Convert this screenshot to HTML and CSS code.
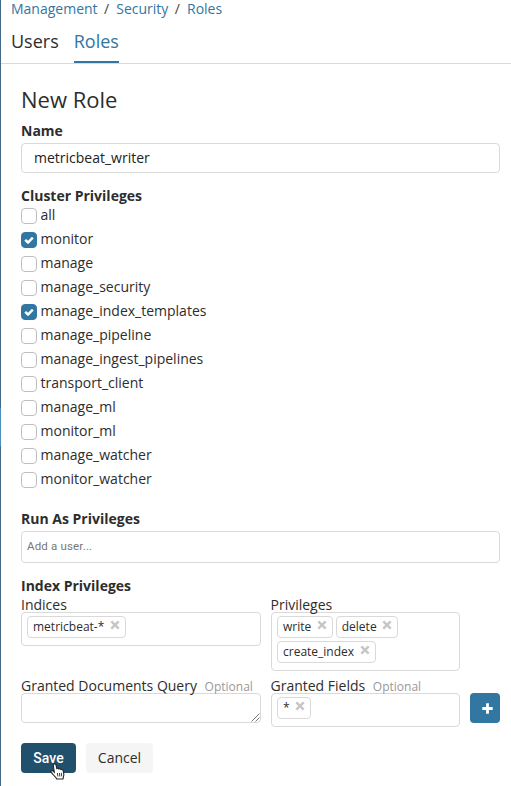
FILE: index.html
```html
<!DOCTYPE html>
<html lang="en">
<head>
<meta charset="utf-8">
<title>New Role</title>
<link rel="stylesheet" href="styles.css">
</head>
<body>
<svg width="0" height="0" class="defs" aria-hidden="true">
  <symbol id="x" viewBox="0 0 10 10"><path d="M1.3 1.3L8.7 8.7M8.7 1.3L1.3 8.7" fill="none" stroke="#c6c6c6" stroke-width="2.4"/></symbol>
  <symbol id="check" viewBox="0 0 10 8"><path d="M1.2 3.8L4 6.5L8.8 1.6" fill="none" stroke="#fff" stroke-width="2.5"/></symbol>
</svg>
<div class="page">
  <nav class="crumbs"><a>Management</a><i>/</i><a>Security</a><i>/</i><a>Roles</a></nav>
  <div class="tabs"><a class="tab">Users</a><a class="tab active">Roles</a></div>
  <main class="form">
    <h1>New Role</h1>
    <h2>Name</h2>
    <div class="input name">metricbeat_writer</div>
    <h2 class="cluster-title">Cluster Privileges</h2>
    <ul class="checks">
      <li><span class="box"></span>all</li>
      <li><span class="box on"><svg><use href="#check"/></svg></span>monitor</li>
      <li><span class="box"></span>manage</li>
      <li><span class="box"></span>manage_security</li>
      <li><span class="box on"><svg><use href="#check"/></svg></span>manage_index_templates</li>
      <li><span class="box"></span>manage_pipeline</li>
      <li><span class="box"></span>manage_ingest_pipelines</li>
      <li><span class="box"></span>transport_client</li>
      <li><span class="box"></span>manage_ml</li>
      <li><span class="box"></span>monitor_ml</li>
      <li><span class="box"></span>manage_watcher</li>
      <li><span class="box"></span>monitor_watcher</li>
    </ul>
    <h2>Run As Privileges</h2>
    <div class="input users">Add a user...</div>
    <h2 class="index-title">Index Privileges</h2>
    <div class="grid">
      <div class="field">
        <label>Indices</label>
        <div class="input tags"><span class="tag">metricbeat-*<svg><use href="#x"/></svg></span></div>
      </div>
      <div class="field">
        <label>Privileges</label>
        <div class="input tags"><span class="tag">write<svg><use href="#x"/></svg></span><span class="tag">delete<svg><use href="#x"/></svg></span><span class="tag">create_index<svg><use href="#x"/></svg></span></div>
      </div>
      <div></div>
      <div class="field">
        <label>Granted Documents Query <small>Optional</small></label>
        <div class="input area"><svg class="grip" viewBox="0 0 9 9"><path d="M0.5 8.5L8.5 0.5M4.5 8.5L8.5 4.5" stroke="#777" fill="none"/></svg></div>
      </div>
      <div class="field">
        <label>Granted Fields <small>Optional</small></label>
        <div class="input tags"><span class="tag">*<svg><use href="#x"/></svg></span></div>
      </div>
      <button class="add" aria-label="Add"><svg viewBox="0 0 11 11"><path d="M5.5 0.3V10.7M0.3 5.5H10.7" stroke="#fff" stroke-width="2.8"/></svg></button>
    </div>
    <div class="actions"><button class="save">Save</button><button class="cancel">Cancel</button></div>
  </main>
  <svg class="cursor" viewBox="0 0 15 17"><path d="M4.2 1C5 .6 5.8 1 6 1.8L6.8 5.6C7.6 5 8.5 5.2 8.9 6C9.7 5.5 10.7 5.8 11 6.6C12 6.2 13 6.8 13.2 7.8L13.8 11C14 13 13.2 13.7 13 16H6.8C6 14 4 13 2.8 11.3L1 8.9C.5 7.8 1.8 7 2.8 7.8L4.3 9.2L3.3 2.5C3.2 1.8 3.5 1.2 4.2 1Z" fill="#fff" stroke="#222" stroke-width="1.1"/><path d="M7.4 10L7.9 13.5M9.4 10L9.8 13.5M11.3 9.8L11.7 13.3" stroke="#222" stroke-width=".9"/></svg>
</div>
</body>
</html>
```
FILE: styles.css
```css
* { box-sizing: border-box; }
body { margin: 0; background: #fff; color: #2d2d2d; font: 14px/18px "Open Sans", sans-serif; }
.defs { position: absolute; }
.page { position: relative; height: 786px; overflow: hidden; border-left: 1px solid; border-image: linear-gradient(#41698a 0 408px, #4a90bd 408px 446px, #41698a 446px) 1; }
.crumbs { height: 27px; padding-left: 10px; color: #444; }
.crumbs a { color: #3276a2; }
.crumbs i { font-style: normal; margin: 0 7px 0 6.5px; }
.tabs { display: flex; gap: 15px; height: 37px; padding-left: 10px; border-bottom: 1px solid #d9d9d9; font-size: 18px; line-height: 29px; }
.tab { height: 36px; }
.tab.active { color: #3276a2; border-bottom: 2px solid #3276a2; }
.form { padding: 21px 11px 0 20px; }
h1 { margin: 0; font-size: 22px; line-height: 29px; font-weight: 400; height: 37px; }
h2 { margin: 0; font-size: 14px; line-height: 18px; font-weight: 700; }
.input { border: 1px solid #d9d9d9; border-radius: 4px; background: #fff; }
.name { height: 30px; margin-top: 3px; padding-left: 12px; line-height: 28px; color: #222; }
.cluster-title { margin-top: 14px; }
.checks { list-style: none; margin: 0 0 17px; padding: 0; }
.checks li { display: flex; align-items: flex-start; gap: 3.5px; height: 24px; line-height: 20px; }
.box { width: 16px; height: 16px; margin-top: 3px; border: 1px solid #bfbfbf; border-radius: 4px; display: flex; align-items: center; justify-content: center; }
.box.on { background: #3276a2; border-color: #3276a2; }
.box svg { width: 10px; height: 8px; }
.users { height: 32px; margin-top: 3px; padding-left: 5px; font: 11.5px/29px Roboto, sans-serif; letter-spacing: 0.17px; color: #777; }
.index-title { margin-top: 14px; }
.grid { display: grid; grid-template-columns: 240px 189px 30px; column-gap: 10px; row-gap: 5px; }
label { display: block; height: 17px; line-height: 19px; white-space: nowrap; }
small { margin-left: 4px; font-size: 12px; color: #999; }
.field:nth-child(3n+2) label { margin-left: -0.5px; }
.tags { display: flex; flex-wrap: wrap; gap: 3px; min-height: 34px; padding: 3px 5px 7px; }
.tag { display: flex; height: 22px; padding: 0 5px; border: 1px solid #d9d9d9; border-radius: 4px; font-size: 12px; line-height: 19px; }
.tag svg { width: 10px; height: 10px; margin: 3px 0 0 5.5px; }
.area { display: flex; align-items: flex-end; justify-content: flex-end; height: 30px; }
.grip { width: 9px; height: 9px; }
button { border: 0; border-radius: 4px; padding: 0; font: inherit; color: inherit; height: 30px; }
.add { margin-top: 17px; width: 30px; background: #3276a2; padding: 2px 0 0 4px; }
.add svg { width: 11px; height: 11px; }
.actions { display: flex; gap: 10px; margin-top: 16px; }
.save { width: 55px; background: #21506d; color: #fff; font: 500 14px Roboto, sans-serif; }
.cancel { width: 67px; background: #f5f5f5; }
.cursor { position: absolute; left: 49px; top: 763px; width: 15px; height: 17px; }
```
